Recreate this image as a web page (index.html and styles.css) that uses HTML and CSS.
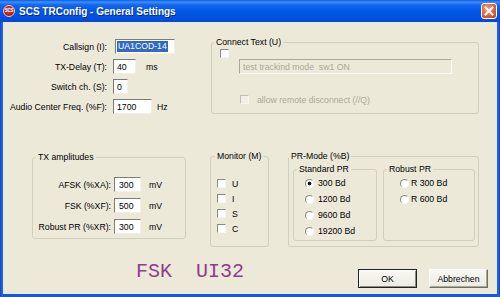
FILE: index.html
```html
<!DOCTYPE html>
<html lang="de">
<head>
    <meta charset="UTF-8">
    <title>SCS TRConfig - General Settings</title>
    <link rel="stylesheet" href="styles.css">
</head>
<body>
    <div class="window">
        <div class="titlebar">
            <span class="app-icon">SCS</span>
            <span class="title">SCS TRConfig - General Settings</span>
            <span class="close-btn">
                <svg width="14" height="14" viewBox="0 0 14 14">
                    <path d="M3.5 3.5 L10.5 10.5 M10.5 3.5 L3.5 10.5" stroke="#fff" stroke-width="2" stroke-linecap="square"/>
                </svg>
            </span>
        </div>

        <div class="client">
            <div class="top-row">
                <!-- general fields -->
                <div class="fields">
                    <span class="field-label">Callsign (I):</span>
                    <div class="ctl"><span class="edit w-call"><span class="sel">UA1COD-14</span></span></div>

                    <span class="field-label">TX-Delay (T):</span>
                    <div class="ctl"><span class="edit w-delay">40</span><span class="unit u-ms">ms</span></div>

                    <span class="field-label">Switch ch. (S):</span>
                    <div class="ctl"><span class="edit w-switch">0</span></div>

                    <span class="field-label">Audio Center Freq. (%F):</span>
                    <div class="ctl"><span class="edit w-freq">1700</span><span class="unit u-hz">Hz</span></div>
                </div>

                <fieldset class="group connect">
                    <legend>Connect Text (U)</legend>
                    <div class="connect-body">
                        <div class="check-row"><span class="check"></span></div>
                        <span class="edit disabled w-text">test trackind mode  sw1 ON</span>
                        <div class="check-row remote">
                            <span class="check disabled"></span>
                            <span class="muted">allow remote disconnect (//Q)</span>
                        </div>
                    </div>
                </fieldset>
            </div>

            <div class="mid-row">
                <fieldset class="group tx">
                    <legend>TX amplitudes</legend>
                    <div class="amp-grid">
                        <span class="field-label">AFSK (%XA):</span>
                        <div class="ctl"><span class="edit w-amp">300</span><span class="unit u-mv">mV</span></div>
                        <span class="field-label">FSK (%XF):</span>
                        <div class="ctl"><span class="edit w-amp">500</span><span class="unit u-mv">mV</span></div>
                        <span class="field-label">Robust PR (%XR):</span>
                        <div class="ctl"><span class="edit w-amp">300</span><span class="unit u-mv">mV</span></div>
                    </div>
                </fieldset>

                <fieldset class="group monitor">
                    <legend>Monitor (M)</legend>
                    <div class="monitor-list">
                        <div class="mon-row"><span class="check"></span><span>U</span></div>
                        <div class="mon-row"><span class="check"></span><span>I</span></div>
                        <div class="mon-row"><span class="check"></span><span>S</span></div>
                        <div class="mon-row"><span class="check"></span><span>C</span></div>
                    </div>
                </fieldset>

                <fieldset class="group pr-mode">
                    <legend>PR-Mode (%B)</legend>
                    <div class="pr-body">
                        <fieldset class="group standard">
                            <legend>Standard PR</legend>
                            <div class="radio-list">
                                <div class="radio-row"><span class="radio checked"></span><span>300 Bd</span></div>
                                <div class="radio-row"><span class="radio"></span><span>1200 Bd</span></div>
                                <div class="radio-row"><span class="radio"></span><span>9600 Bd</span></div>
                                <div class="radio-row"><span class="radio"></span><span>19200 Bd</span></div>
                            </div>
                        </fieldset>
                        <fieldset class="group robust">
                            <legend>Robust PR</legend>
                            <div class="radio-list">
                                <div class="radio-row"><span class="radio"></span><span>R 300 Bd</span></div>
                                <div class="radio-row"><span class="radio"></span><span>R 600 Bd</span></div>
                            </div>
                        </fieldset>
                    </div>
                </fieldset>
            </div>

            <div class="bottom-row">
                <span class="status">FSK  UI32</span>
                <div class="buttons">
                    <span class="btn default">OK</span>
                    <span class="btn">Abbrechen</span>
                </div>
            </div>
        </div>
    </div>
</body>
</html>
```

FILE: styles.css
```css
* {
    box-sizing: border-box;
}
body {
    margin: 0;
    font-family: "Liberation Sans", Arial, sans-serif;
    font-size: 8.7px;
    color: #000;
    background: #fff;
}
.window {
    width: 500px;
    height: 297px;
    display: flex;
    flex-direction: column;
    background: linear-gradient(90deg, #0a3fc8 0, #2b6ae6 2px, #1657d6 3px, #1657d6 497px, #2b6ae6 498px, #0a3fc8 500px);
}
.titlebar {
    height: 22px;
    display: flex;
    align-items: center;
    padding: 0 3px;
    color: #fff;
    background: linear-gradient(#0b5ae8 0, #3d8ff7 2px, #1265ee 5px, #0157e6 11px, #0052e0 17px, #0349d6 22px);
}
.app-icon {
    width: 12px;
    height: 12px;
    margin-right: 4px;
    border-radius: 50%;
    border: 1px solid #f4c9c0;
    background: radial-gradient(circle at 45% 40%, #e8453c, #a5120e 75%);
    color: #fff;
    font-size: 4.5px;
    font-weight: bold;
    line-height: 10px;
    text-align: center;
    letter-spacing: -0.2px;
}
.title {
    flex: 1;
    font-size: 10px;
    font-weight: bold;
    text-shadow: 1px 1px 0 #0b2a8c;
}
.close-btn {
    width: 16px;
    height: 16px;
    display: flex;
    align-items: center;
    justify-content: center;
    border: 1px solid #fff;
    border-radius: 3px;
    background: radial-gradient(circle at 40% 35%, #f3a285, #de5a34 60%, #c2421f);
}
.client {
    flex: 1;
    margin: 0 3px 3px;
    background: #ece9d8;
    display: flex;
    flex-direction: column;
}

/* shared controls */
.group {
    margin: 0;
    padding: 0;
    min-width: 0;
    border: 1px solid #d0d0bf;
    border-radius: 3px;
}
.group legend {
    margin-left: 3px;
    padding: 0 2px;
    line-height: 12px;
}
.field-label {
    text-align: right;
    white-space: nowrap;
}
.ctl {
    display: flex;
    align-items: center;
    height: 15px;
}
.edit {
    height: 15px;
    display: flex;
    align-items: center;
    padding: 0 3px;
    background: #fff;
    border: 1px solid;
    border-color: #7c7b74 #f1efe6 #f1efe6 #7c7b74;
    white-space: pre;
}
.edit.disabled {
    background: #ece9d8;
    color: #aca899;
    border-color: #aca899 #fbfaf6 #fbfaf6 #aca899;
}
.sel {
    margin-left: -1px;
    padding: 0 1px;
    line-height: 11px;
    background: #316ac5;
    color: #fff;
}
.unit {
    margin-left: 8px;
}
.check {
    width: 9px;
    height: 9px;
    flex: none;
    background: #fff;
    border: 1px solid;
    border-color: #8c8b82 #f7f6f1 #f7f6f1 #8c8b82;
}
.check.disabled {
    background: #f1efe6;
    border-color: #c2bfb2 #f7f6f1 #f7f6f1 #c2bfb2;
}
.radio {
    width: 9px;
    height: 9px;
    flex: none;
    border-radius: 50%;
    background: #fff;
    border: 1px solid;
    border-color: #8c8b82 #f7f6f1 #f7f6f1 #8c8b82;
}
.radio.checked {
    background: radial-gradient(circle, #111 1.6px, #fff 2.2px);
}
.muted {
    color: #aca899;
}

/* top row */
.top-row {
    display: flex;
    align-items: flex-start;
    margin-top: 14px;
}
.fields {
    width: 208px;
    display: grid;
    grid-template-columns: 104px auto;
    grid-auto-rows: 15px;
    row-gap: 5px;
    column-gap: 6px;
    align-items: center;
    padding-top: 3px;
}
.w-call {
    width: 60px;
    margin-left: 2px;
    padding-left: 2px;
}
.w-delay {
    width: 23px;
}
.w-switch {
    width: 15px;
}
.w-freq {
    width: 39px;
}
.u-ms {
    margin-left: 10px;
}
.u-hz {
    margin-left: 5px;
}
.connect {
    width: 268px;
}
.connect legend {
    margin-left: 2px;
}
.connect-body {
    padding: 0 0 8px 8px;
}
.check-row {
    height: 11px;
    display: flex;
    align-items: center;
}
.w-text {
    width: 213px;
    margin-left: 19px;
    padding-left: 3px;
}
.remote {
    margin-top: 20px;
    margin-left: 20px;
    gap: 8px;
}

/* middle row */
.mid-row {
    display: flex;
    align-items: stretch;
    margin-top: 36px;
    padding-left: 29px;
}
.tx {
    width: 154px;
    align-self: flex-start;
    margin-top: 1px;
}
.amp-grid {
    display: grid;
    grid-template-columns: 75px auto;
    grid-auto-rows: 15px;
    row-gap: 6px;
    column-gap: 3px;
    align-items: center;
    margin-top: 14px;
    padding: 0 0 4px 3px;
}
.w-amp {
    width: 27px;
    padding-left: 4px;
}
.monitor {
    width: 59px;
    margin-left: 24px;
}
.monitor legend {
    margin-left: 4px;
}
.monitor-list {
    margin-top: 14px;
    padding-left: 6px;
}
.mon-row {
    height: 15px;
    display: flex;
    align-items: center;
    gap: 6px;
}
.pr-mode {
    width: 191px;
    margin-left: 19px;
}
.pr-mode > legend {
    margin-left: 0;
}
.pr-body {
    display: flex;
    gap: 6px;
    margin-top: 1px;
    padding: 0 0 5px 4px;
}
.standard {
    width: 84px;
}
.standard .radio-list {
    padding: 0 0 1px 11px;
}
.robust {
    width: 92px;
}
.robust .radio-list {
    padding-left: 16px;
}
.radio-row {
    height: 16px;
    display: flex;
    align-items: center;
    gap: 4px;
}
.robust .radio-row {
    gap: 2px;
}

/* bottom row */
.bottom-row {
    display: flex;
    align-items: flex-start;
    margin-top: 15px;
    padding: 0 9px 0 133px;
}
.status {
    font-family: "Liberation Mono", "Courier New", monospace;
    font-size: 20px;
    line-height: 20px;
    color: #8e3d8e;
    white-space: pre;
}
.buttons {
    display: flex;
    gap: 12px;
    margin-left: auto;
    margin-top: 7px;
}
.btn {
    width: 59px;
    height: 19px;
    display: flex;
    align-items: center;
    justify-content: center;
    background: linear-gradient(#f8f7f2, #ecebe3);
    border: 1px solid;
    border-color: #fff #716f64 #716f64 #fff;
    box-shadow: inset -1px -1px 0 #aca899;
}
.btn.default {
    border-color: #222;
    box-shadow: inset 1px 1px 0 #fff, inset -1px -1px 0 #8d8b80;
}
```
